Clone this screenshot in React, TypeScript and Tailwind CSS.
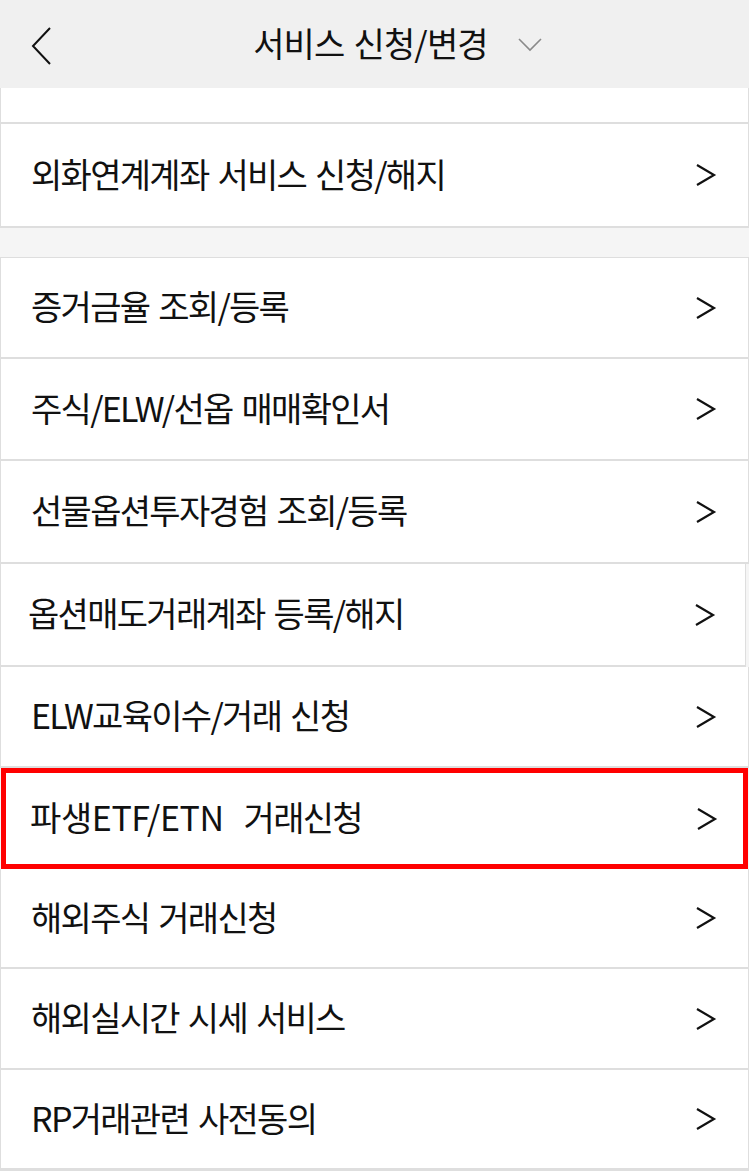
import React from 'react';

type Row = { label: string; h: string; extra?: string; shift?: boolean };

const ROWS: Row[] = [
  { label: '증거금율 조회/등록', h: 'h-[102px]', extra: 'border-t' },
  { label: '주식/ELW/선옵 매매확인서', h: 'h-[102px]' },
  { label: '선물옵션투자경험 조회/등록', h: 'h-[103px]' },
  { label: '옵션매도거래계좌 등록/해지', h: 'h-[103px]', shift: true },
  { label: 'ELW교육이수/거래 신청', h: 'h-[101px]' },
];

const BOTTOM: Row[] = [
  { label: '해외주식 거래신청', h: 'h-[100px]' },
  { label: '해외실시간 시세 서비스', h: 'h-[101px]' },
  { label: 'RP거래관련 사전동의', h: 'h-[101px]', extra: 'border-b-[3px]' },
];

const Arrow = () => (
  <svg width="22" height="24" viewBox="0 0 22 24" className="shrink-0">
    <polyline points="2,2 19,12 2,22" fill="none" stroke="#111" strokeWidth="2.2" />
  </svg>
);

const ListRow = ({ row }: { row: Row }) => (
  <div
    className={`${row.h} bg-white border-x border-b-2 border-[#dedede] flex items-center justify-between ${
      row.shift ? 'pl-[27px] pr-[29px] mr-[3px]' : 'pl-[30px] pr-[31px]'
    } ${row.extra ?? ''}`}
  >
    <span className="text-[34px] tracking-[-1.7px] [word-spacing:3px] text-[#111] pb-[4px]">{row.label}</span>
    <Arrow />
  </div>
);

export default function App() {
  return (
    <div
      className="w-[749px] h-[1171px] overflow-hidden bg-[#f5f5f5]"
      style={{ fontFamily: '"Noto Sans CJK KR", "Noto Sans", sans-serif' }}
    >
      {/* Header */}
      <header className="h-[88px] bg-[#f0f0f0] flex items-center relative">
        <button className="absolute left-[30px] top-[26px]">
          <svg width="24" height="40" viewBox="0 0 24 40">
            <polyline points="20,2 3,20 20,38" fill="none" stroke="#111" strokeWidth="2" />
          </svg>
        </button>
        <div className="flex-1 flex items-center justify-center gap-[30px] pl-[46px]">
          <h1 className="text-[34px] tracking-[-0.8px] [word-spacing:2px] text-[#111] font-normal pb-[4px]">서비스 신청/변경</h1>
          <svg width="24" height="14" viewBox="0 0 24 14" className="mt-[2px]">
            <polyline points="1,1 12,12 23,1" fill="none" stroke="#8a8a8a" strokeWidth="1.6" />
          </svg>
        </div>
      </header>

      {/* partial row above */}
      <div className="h-[36px] bg-white border-x border-b-2 border-[#dedede]" />

      <ListRow row={{ label: '외화연계계좌 서비스 신청/해지', h: 'h-[104px]' }} />

      <div className="h-[29px] bg-[#f5f5f5]" />

      {ROWS.map(r => (
        <ListRow key={r.label} row={r} />
      ))}

      {/* highlighted row */}
      <div className="h-[101px] bg-white border-[5px] border-[#ff0000] mx-[1px] flex items-center justify-between pl-[24px] pr-[25px]">
        <span className="text-[34px] tracking-[-1.7px] [word-spacing:4px] text-[#111] whitespace-pre pb-[4px]">
          <span className="tracking-[-0.4px]">파생ETF/ETN</span>  거래신청
        </span>
        <Arrow />
      </div>

      {BOTTOM.map(r => (
        <ListRow key={r.label} row={r} />
      ))}
    </div>
  );
}
